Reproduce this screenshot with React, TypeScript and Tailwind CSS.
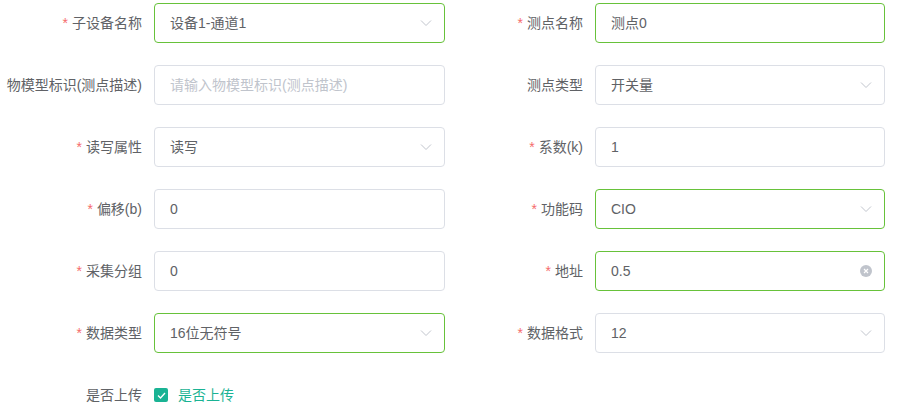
import React from "react";

const font = {
  fontFamily:
    '"Helvetica Neue", Helvetica, "Liberation Sans", "Noto Sans CJK SC", Arial, sans-serif',
};

function Chevron() {
  return (
    <svg width="12" height="7" viewBox="0 0 12 7" className="absolute right-[12px] top-1/2 -translate-y-1/2">
      <path d="M1 1 L6 6 L11 1" fill="none" stroke="#c0c4cc" strokeWidth="1" />
    </svg>
  );
}

function Clear() {
  return (
    <span className="absolute right-[12px] top-1/2 -translate-y-1/2 w-[12px] h-[12px] rounded-full bg-[#c0c4cc] flex items-center justify-center">
      <svg width="6" height="6" viewBox="0 0 6 6">
        <path d="M1 1 L5 5 M5 1 L1 5" stroke="#fff" strokeWidth="1.2" />
      </svg>
    </span>
  );
}

type FieldProps = {
  label: string;
  required?: boolean;
  value?: string;
  placeholder?: string;
  focus?: boolean;
  select?: boolean;
  clear?: boolean;
  labelW: string;
  inputW: string;
};

function Field({ label, required, value, placeholder, focus, select, clear, labelW, inputW }: FieldProps) {
  return (
    <div className="flex items-center h-[40px]">
      <div className={`${labelW} pr-3 text-right text-[14px] leading-[40px] text-[#606266] whitespace-nowrap`}>
        {required && <span className="text-[#f56c6c] mr-[4px]">*</span>}
        {label}
      </div>
      <div
        className={`${inputW} relative h-[40px] rounded-[4px] border ${
          focus ? "border-[#67c23a]" : "border-[#dcdfe6]"
        } bg-white flex items-center px-[15px] text-[14px]`}
      >
        {value ? (
          <span className="text-[#606266]">{value}</span>
        ) : (
          <span className="text-[#c0c4cc]">{placeholder}</span>
        )}
        {select && <Chevron />}
        {clear && <Clear />}
      </div>
    </div>
  );
}

type F = Omit<FieldProps, "labelW" | "inputW">;

const rows: [F, F][] = [
  [
    { label: "子设备名称", required: true, value: "设备1-通道1", focus: true, select: true },
    { label: "测点名称", required: true, value: "测点0", focus: true },
  ],
  [
    { label: "物模型标识(测点描述)", placeholder: "请输入物模型标识(测点描述)" },
    { label: "测点类型", value: "开关量", select: true },
  ],
  [
    { label: "读写属性", required: true, value: "读写", select: true },
    { label: "系数(k)", required: true, value: "1" },
  ],
  [
    { label: "偏移(b)", required: true, value: "0" },
    { label: "功能码", required: true, value: "CIO", focus: true, select: true },
  ],
  [
    { label: "采集分组", required: true, value: "0" },
    { label: "地址", required: true, value: "0.5", focus: true, clear: true },
  ],
  [
    { label: "数据类型", required: true, value: "16位无符号", focus: true, select: true },
    { label: "数据格式", required: true, value: "12", select: true },
  ],
];

export default function App() {
  return (
    <div className="w-[901px] h-[407px] bg-white overflow-hidden" style={font}>
      <div className="pt-[3px] flex flex-col gap-[22px]">
        {rows.map(([a, b], i) => (
          <div key={i} className="flex">
            <div className="w-[450px]">
              <Field {...a} labelW="w-[154px]" inputW="w-[291px]" />
            </div>
            <div>
              <Field {...b} labelW="w-[145px]" inputW="w-[290px]" />
            </div>
          </div>
        ))}
        <div className="flex items-center h-[40px]">
          <div className="w-[154px] pr-3 text-right text-[14px] text-[#606266]">是否上传</div>
          <div className="flex items-center">
            <span className="w-[14px] h-[14px] rounded-[2px] bg-[#1ab394] flex items-center justify-center">
              <svg width="9" height="7" viewBox="0 0 9 7">
                <path d="M1 3.5 L3.5 6 L8 1" fill="none" stroke="#fff" strokeWidth="1.3" />
              </svg>
            </span>
            <span className="ml-[10px] text-[14px] text-[#1ab394]">是否上传</span>
          </div>
        </div>
      </div>
    </div>
  );
}
